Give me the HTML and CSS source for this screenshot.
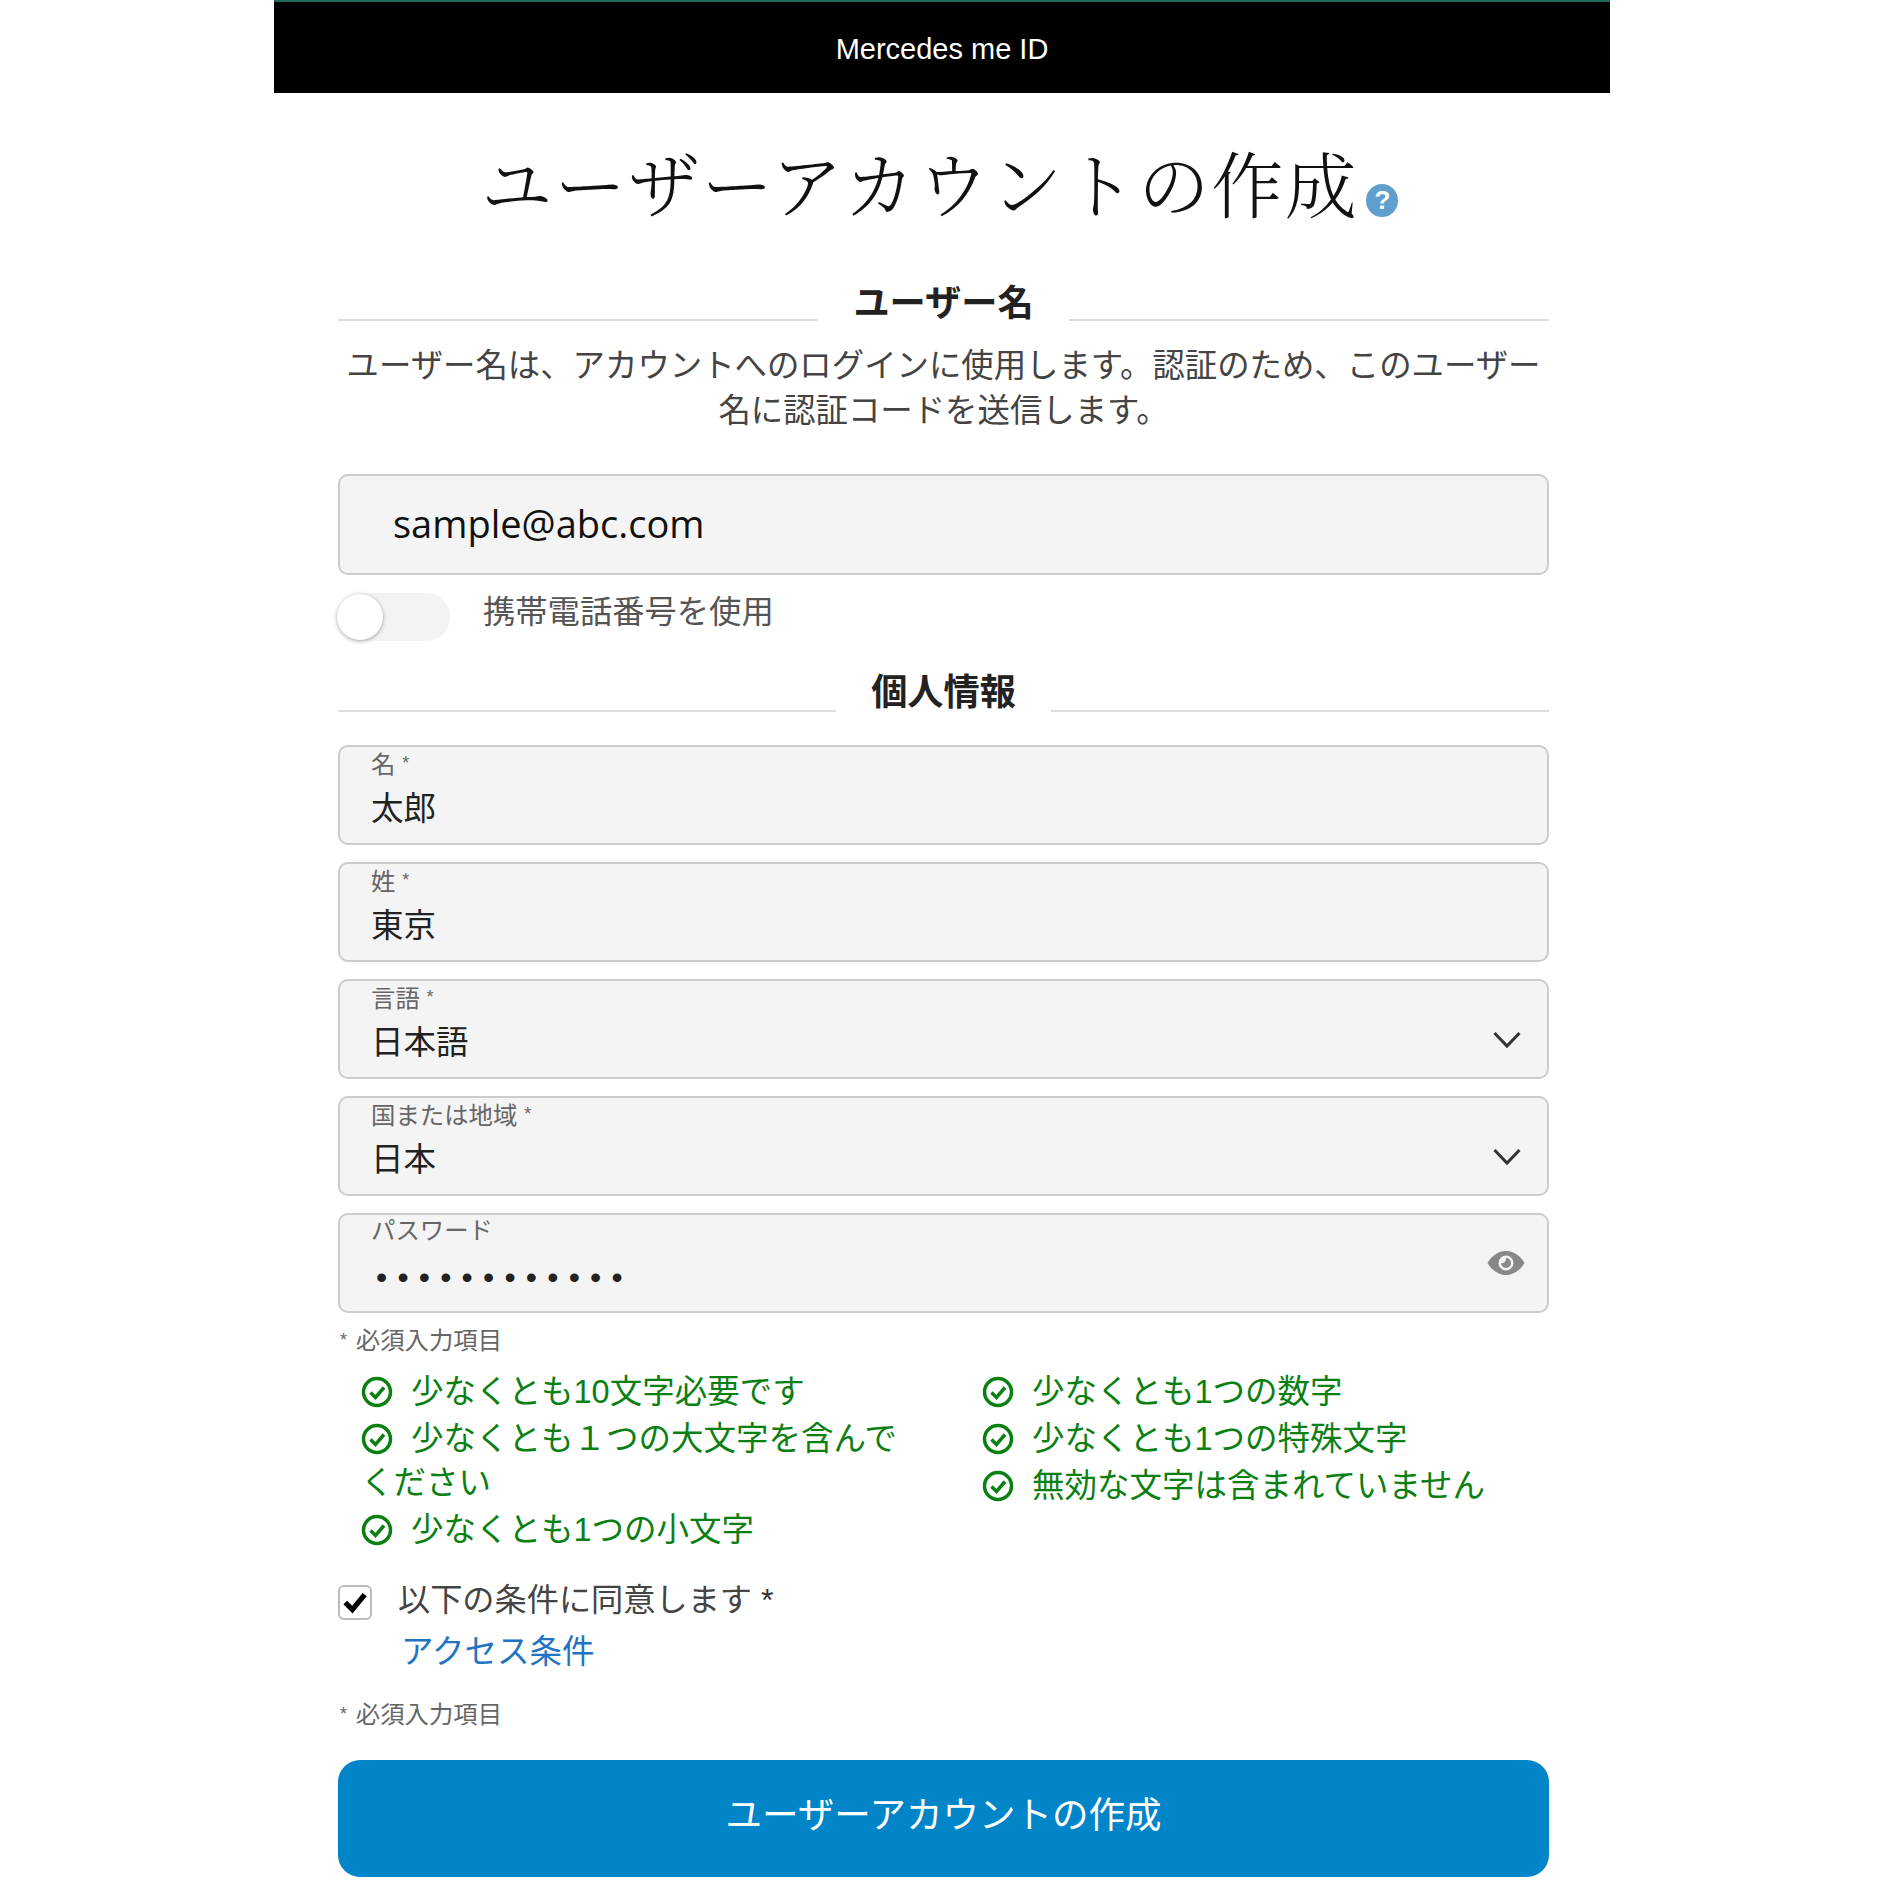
FILE: index.html
```html
<!DOCTYPE html>
<html lang="ja">
<head>
  <meta charset="UTF-8">
  <meta name="viewport" content="width=device-width, initial-scale=1.0">
  <title>Mercedes me ID</title>
  <link rel="stylesheet" href="styles.css">
</head>
<body>
  <div class="page">
    <header class="top-bar">Mercedes me ID</header>

    <main class="form-wrap">
      <h1 class="page-title">ユーザーアカウントの作成<span class="help-icon">?</span></h1>

      <!-- User name -->
      <h2 class="section-title first"><span>ユーザー名</span></h2>
      <p class="section-desc">ユーザー名は、アカウントへのログインに使用します。認証のため、このユーザー<br>名に認証コードを送信します。</p>

      <div class="email-field">sample@abc.com</div>

      <div class="toggle-row">
        <span class="toggle"><span class="toggle-knob"></span></span>
        <span class="toggle-label">携帯電話番号を使用</span>
      </div>

      <!-- Personal info -->
      <h2 class="section-title second"><span>個人情報</span></h2>

      <div class="fields">
        <div class="field">
          <div class="field-label">名 <span class="star">*</span></div>
          <div class="field-value">太郎</div>
        </div>
        <div class="field">
          <div class="field-label">姓 <span class="star">*</span></div>
          <div class="field-value">東京</div>
        </div>
        <div class="field">
          <div class="field-label">言語 <span class="star">*</span></div>
          <div class="field-value">日本語</div>
          <svg class="chevron" viewBox="0 0 28 18"><path d="M1.500 2 L14 15 L26.500 2" /></svg>
        </div>
        <div class="field">
          <div class="field-label">国または地域 <span class="star">*</span></div>
          <div class="field-value">日本</div>
          <svg class="chevron" viewBox="0 0 28 18"><path d="M1.500 2 L14 15 L26.500 2" /></svg>
        </div>
        <div class="field">
          <div class="field-label">パスワード</div>
          <div class="field-value dots">••••••••••••</div>
          <svg class="eye" viewBox="0 0 38 26">
            <path fill-rule="evenodd" d="M19 1C10.500 1 4 7 .5 13 4 19 10.500 25 19 25s15-6 18.500-12C34 7 27.500 1 19 1zm0 4.500a7.500 7.500 0 1 1 0 15 7.500 7.500 0 0 1 0-15z" />
            <path d="M19 8a5 5 0 1 1-5 5c2.500 1.200 5.500-1.800 5-5z" />
          </svg>
        </div>
      </div>

      <div class="note first-note"><span class="note-star">*</span> 必須入力項目</div>

      <!-- Password rules -->
      <div class="rules">
        <ul class="rule-col">
          <li><svg class="ok" viewBox="0 0 32 32"><circle cx="16" cy="16" r="13.500" /><path d="M9.500 16.500 L14.500 21.500 L23 11.500" /></svg>少なくとも10文字必要です</li>
          <li><svg class="ok" viewBox="0 0 32 32"><circle cx="16" cy="16" r="13.500" /><path d="M9.500 16.500 L14.500 21.500 L23 11.500" /></svg>少なくとも１つの大文字を含んでください</li>
          <li><svg class="ok" viewBox="0 0 32 32"><circle cx="16" cy="16" r="13.500" /><path d="M9.500 16.500 L14.500 21.500 L23 11.500" /></svg>少なくとも1つの小文字</li>
        </ul>
        <ul class="rule-col">
          <li><svg class="ok" viewBox="0 0 32 32"><circle cx="16" cy="16" r="13.500" /><path d="M9.500 16.500 L14.500 21.500 L23 11.500" /></svg>少なくとも1つの数字</li>
          <li><svg class="ok" viewBox="0 0 32 32"><circle cx="16" cy="16" r="13.500" /><path d="M9.500 16.500 L14.500 21.500 L23 11.500" /></svg>少なくとも1つの特殊文字</li>
          <li><svg class="ok" viewBox="0 0 32 32"><circle cx="16" cy="16" r="13.500" /><path d="M9.500 16.500 L14.500 21.500 L23 11.500" /></svg>無効な文字は含まれていません</li>
        </ul>
      </div>

      <!-- Terms -->
      <div class="terms">
        <span class="checkbox"><svg viewBox="0 0 34 34"><path d="M6 17 L14 25 L28 8" /></svg></span>
        <div class="terms-text">
          <div class="terms-line">以下の条件に同意します <span class="terms-star">*</span></div>
          <a class="terms-link" href="#">アクセス条件</a>
        </div>
      </div>

      <div class="note second-note"><span class="note-star">*</span> 必須入力項目</div>

      <button class="submit-button">ユーザーアカウントの作成</button>
    </main>
  </div>
</body>
</html>
```

FILE: styles.css
```css
body {
  margin: 0;
  background: #fff;
  font-family: "Liberation Sans", "Noto Sans CJK JP", sans-serif;
  color: #444;
}

.page {
  width: 1336px;
  margin: 0 auto;
}

.top-bar {
  height: 91px;
  border-top: 2px solid #1e6b5c;
  background: #000;
  color: #fff;
  font-size: 29px;
  line-height: 94px;
  text-align: center;
}

.form-wrap {
  padding: 0 61px 7px 64px;
}

.page-title {
  margin: 55px 0 0;
  padding-right: 8px;
  font-family: "Liberation Serif", "Noto Serif CJK JP", "Noto Sans CJK JP", serif;
  font-size: 72px;
  font-weight: 300;
  line-height: 80px;
  letter-spacing: 1.500px;
  color: #111;
  text-align: center;
  white-space: nowrap;
}

.help-icon {
  display: inline-block;
  width: 32px;
  height: 33px;
  margin-left: 8px;
  border-radius: 50%;
  background: #5f9fce;
  color: #fff;
  font-family: "Liberation Sans", sans-serif;
  font-size: 26px;
  font-weight: bold;
  line-height: 33px;
  letter-spacing: 0;
  text-align: center;
  vertical-align: 3px;
}

.section-title {
  display: flex;
  align-items: flex-end;
  gap: 35px;
  margin: 54px 0 0;
  font-size: 36.200px;
  font-weight: bold;
  line-height: 44px;
  color: #222;
}

.section-title.second {
  margin-top: 30px;
}

.section-title::before,
.section-title::after {
  content: "";
  flex: 1;
  height: 2px;
  margin-bottom: 3px;
  background: #ddd;
}

.section-title.first::before,
.section-title.first::after {
  margin-bottom: 5px;
}

.section-desc {
  margin: 18px 0 0;
  font-size: 32.400px;
  line-height: 45px;
  color: #444;
  text-align: center;
}

.email-field {
  height: 97px;
  margin-top: 40px;
  padding-left: 53px;
  border: 2px solid #ccc;
  border-radius: 10px;
  background: #f4f4f4;
  font-family: "Open Sans", sans-serif;
  font-size: 38px;
  line-height: 94px;
  color: #111;
}

.toggle-row {
  display: flex;
  align-items: flex-start;
  gap: 33px;
  margin-top: 18px;
  height: 48px;
}

.toggle {
  position: relative;
  width: 112px;
  height: 48px;
  border-radius: 24px;
  background: #f3f3f3;
}

.toggle-knob {
  position: absolute;
  top: 1px;
  left: -1px;
  width: 46px;
  height: 46px;
  border-radius: 50%;
  background: #fff;
  box-shadow: 0 1px 4px rgba(0, 0, 0, 0.35);
}

.toggle-label {
  font-size: 32.300px;
  line-height: 38px;
  color: #555;
}

.fields {
  display: flex;
  flex-direction: column;
  gap: 17px;
  margin-top: 30px;
}

.field {
  position: relative;
  box-sizing: border-box;
  height: 100px;
  padding: 0 0 0 31px;
  border: 2px solid #ccc;
  border-radius: 10px;
  background: #f4f4f4;
}

.field-label {
  font-size: 24.400px;
  line-height: 32px;
  color: #666;
}

.star {
  font-size: 18px;
  vertical-align: 4px;
}

.field-value {
  margin-top: 6px;
  font-size: 32.500px;
  line-height: 44px;
  color: #222;
}

.field-value.dots {
  margin-top: 8px;
  padding-left: 5px;
  letter-spacing: 10.200px;
  font-size: 32px;
}

.chevron {
  position: absolute;
  top: 50px;
  right: 26px;
  width: 28px;
  height: 18px;
  fill: none;
  stroke: #333;
  stroke-width: 3;
}

.eye {
  position: absolute;
  top: 35px;
  right: 22px;
  width: 38px;
  height: 26px;
  fill: #888;
}

.note {
  font-size: 24.400px;
  line-height: 30px;
  color: #666;
}

.note-star {
  font-size: 18px;
  vertical-align: 3px;
  margin: 0 2px;
}

.first-note {
  margin-top: 12px;
}

.second-note {
  margin-top: 25px;
}

.rules {
  display: grid;
  grid-template-columns: 621px 1fr;
  margin-top: 14px;
  padding-left: 23px;
}

.rule-col {
  display: flex;
  flex-direction: column;
  gap: 3px;
  margin: 0;
  padding: 0 60px 0 0;
  list-style: none;
  font-size: 32.500px;
  line-height: 44px;
  color: #0b8012;
}

.ok {
  width: 32px;
  height: 32px;
  margin-right: 18px;
  vertical-align: -5px;
  fill: none;
  stroke: #0b8012;
  stroke-width: 3.500;
}

.terms {
  display: flex;
  gap: 26px;
  margin-top: 26px;
}

.checkbox {
  box-sizing: border-box;
  width: 34px;
  height: 35px;
  margin-top: 7px;
  border: 2px solid #bbb;
  border-radius: 6px;
  background: #fff;
}

.checkbox svg {
  display: block;
  width: 30px;
  height: 31px;
  fill: none;
  stroke: #000;
  stroke-width: 6;
}

.terms-text {
  font-size: 32.500px;
  line-height: 44px;
  color: #444;
}

.terms-line {
  font-size: 32.200px;
}

.terms-star {
  color: #333;
}

.terms-link {
  display: block;
  margin: 8px 0 0 3px;
  color: #1f74c4;
  text-decoration: none;
}

.submit-button {
  display: block;
  width: 100%;
  height: 117px;
  margin-top: 30px;
  padding-bottom: 14px;
  border: 0;
  border-radius: 22px;
  background: #0086c8;
  color: #fff;
  font-family: inherit;
  font-size: 36.500px;
}
```
